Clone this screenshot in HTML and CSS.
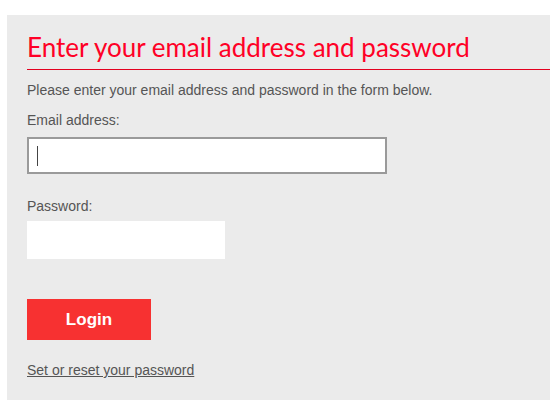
FILE: index.html
```html
<!DOCTYPE html>
<html lang="en">
<head>
	<meta charset="UTF-8">
	<title>Login</title>
	<link rel="stylesheet" href="styles.css">
</head>
<body>
	<div class="login_box">
		<h1 class="login_title">Enter your email address and password</h1>
		<p class="intro">Please enter your email address and password in the form below.</p>
		<form class="login_form" action="#">
			<label class="field_label" for="email">Email address:</label>
			<div class="email_field"><span class="caret"></span></div>
			<label class="field_label pw_label" for="pw">Password:</label>
			<div class="pw_field"></div>
			<button class="login_btn" type="button">Login</button>
		</form>
		<a class="reset_link" href="#">Set or reset your password</a>
	</div>
</body>
</html>
```

FILE: styles.css
```css
*{margin:0;padding:0;box-sizing:border-box;}
html,body{background:#fff;}
body{font-family:"Liberation Sans",Arial,sans-serif;color:#555;overflow:hidden;}
.login_box{margin:15px 0 0 7px;padding:17px 0 22px 20px;background:#ebebeb;height:385px;}
.login_title{font-family:Lato,"Open Sans",sans-serif;font-weight:400;font-size:26px;line-height:31px;color:#ff0026;border-bottom:1px solid #e3001f;padding-bottom:6px;}
.intro{font-size:14px;line-height:20px;margin-top:10px;}
.login_form{display:flex;flex-direction:column;align-items:flex-start;}
.field_label{font-size:14px;line-height:20px;margin-top:10px;}
.email_field{width:360px;height:37px;margin-top:7px;background:#fff;border:2px solid #9a9a9a;padding:7px 0 0 8px;}
.caret{display:block;width:1px;height:20px;background:#444;}
.pw_label{margin-top:22px;}
.pw_field{width:198px;height:38px;margin-top:5px;background:#fff;}
.login_btn{width:124px;height:41px;margin-top:40px;border:0;background:#f73131;color:#fff;font-family:"Liberation Sans",Arial,sans-serif;font-weight:bold;font-size:17px;cursor:pointer;}
.reset_link{display:inline-block;margin-top:20px;font-size:14px;line-height:20px;color:#555;text-decoration:underline;}
```
